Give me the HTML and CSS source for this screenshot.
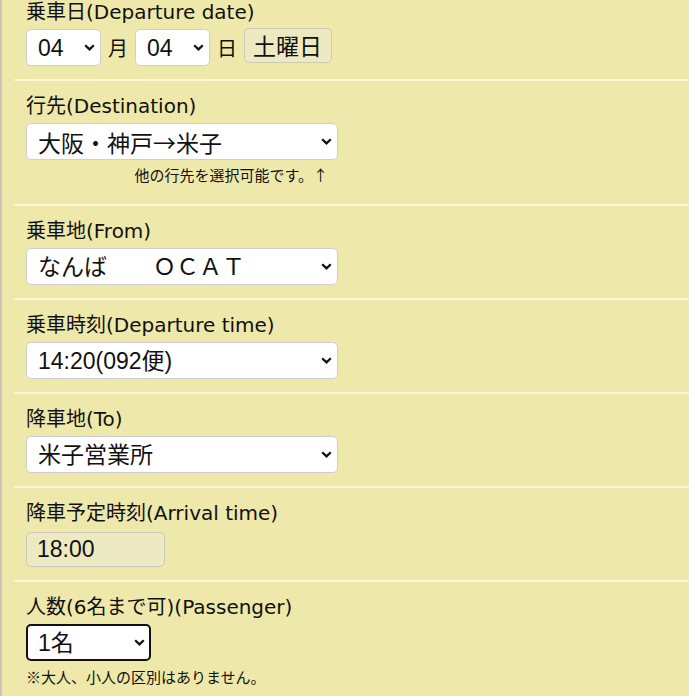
FILE: index.html
```html
<!DOCTYPE html>
<html lang="ja">
<head>
    <meta charset="UTF-8">
    <meta name="viewport" content="width=device-width, initial-scale=1.0">
    <title>乗車予約</title>
    <link rel="stylesheet" href="styles.css">
</head>
<body>
    <div class="form-wrap">
        <!-- 乗車日 -->
        <div class="row first">
            <div class="label">乗車日(Departure date)</div>
            <div class="date-line">
                <select class="pick short">
                    <option>04</option>
                    <option>05</option>
                </select>
                <span class="unit">月</span>
                <select class="pick short">
                    <option>04</option>
                    <option>05</option>
                </select>
                <span class="unit">日</span>
                <span class="weekday">土曜日</span>
            </div>
        </div>

        <!-- 行先 -->
        <div class="row">
            <div class="label">行先(Destination)</div>
            <select class="pick wide jp">
                <option>大阪・神戸→米子</option>
                <option>米子→大阪・神戸</option>
            </select>
            <div class="hint">他の行先を選択可能です。↑</div>
        </div>

        <!-- 乗車地 -->
        <div class="row">
            <div class="label">乗車地(From)</div>
            <select class="pick wide">
                <option>なんば　　ＯＣＡＴ</option>
            </select>
        </div>

        <!-- 乗車時刻 -->
        <div class="row">
            <div class="label">乗車時刻(Departure time)</div>
            <select class="pick wide">
                <option>14:20(092便)</option>
            </select>
        </div>

        <!-- 降車地 -->
        <div class="row">
            <div class="label">降車地(To)</div>
            <select class="pick wide">
                <option>米子営業所</option>
            </select>
        </div>

        <!-- 降車予定時刻 -->
        <div class="row">
            <div class="label">降車予定時刻(Arrival time)</div>
            <input class="arrival" type="text" value="18:00" readonly>
        </div>

        <!-- 人数 -->
        <div class="row last">
            <div class="label">人数(6名まで可)(Passenger)</div>
            <select class="pick count active">
                <option>1名</option>
                <option>2名</option>
                <option>3名</option>
                <option>4名</option>
                <option>5名</option>
                <option>6名</option>
            </select>
            <div class="hint left">※大人、小人の区別はありません。</div>
        </div>
    </div>
</body>
</html>
```

FILE: styles.css
```css
/* ベース */
body {
    margin: 0;
    background: #eee8aa;
    color: #111;
    font-family: "DejaVu Sans", "Noto Sans CJK JP", sans-serif;
}

.form-wrap {
    border-left: 2px solid #c9c7b3;
    padding-left: 12px;
    min-height: 100vh;
}

/* 各項目 */
.row {
    border-bottom: 2px solid #fcf6d2;
    padding: 13px 0 13px 12px;
}

.row.first {
    padding-top: 0;
}

.row.last {
    border-bottom: none;
}

.label {
    font-size: 20px;
    line-height: 24px;
    margin-bottom: 5px;
}

/* セレクト */
.pick {
    display: block;
    height: 37px;
    font-family: "Liberation Sans", "Noto Sans CJK JP", sans-serif;
    font-size: 23px;
    color: #111;
    -webkit-appearance: none;
    appearance: none;
    background: #fff url("data:image/svg+xml,%3Csvg xmlns='http://www.w3.org/2000/svg' width='11' height='7' viewBox='0 0 11 7'%3E%3Cpath d='M1.2 1.2 5.5 5.4 9.8 1.2' fill='none' stroke='%23111' stroke-width='2.3'/%3E%3C/svg%3E") no-repeat right 5px center;
    border: 1px solid #cfcfcf;
    border-radius: 5px;
    padding: 0 20px 0 11px;
}

.pick.jp {
    font-family: "Noto Sans CJK JP", sans-serif;
}

.wide {
    width: 312px;
}

.short {
    width: 75px;
}

.count {
    width: 125px;
}

.active {
    border: 2px solid #111;
    outline: none;
    padding-left: 10px;
    background-position: right 4px center;
}

/* 日付行 */
.date-line {
    display: flex;
    align-items: center;
    gap: 7px;
}

.unit {
    font-family: "Noto Sans CJK JP", sans-serif;
    font-size: 20px;
    line-height: 24px;
}

.weekday {
    align-self: flex-start;
    box-sizing: border-box;
    height: 35px;
    width: 88px;
    margin-top: -1px;
    padding: 0 8px;
    font-family: "Noto Sans CJK JP", sans-serif;
    font-size: 23px;
    line-height: 33px;
    background: #ede9c0;
    border: 1px solid #cdcbb8;
    border-radius: 5px;
}

/* 降車予定時刻 */
.arrival {
    display: block;
    box-sizing: border-box;
    width: 139px;
    height: 35px;
    margin-top: 7px;
    padding: 0 10px;
    font-family: "Liberation Sans", sans-serif;
    font-size: 23px;
    color: #111;
    background: #ede9c0;
    border: 1px solid #cdcbb8;
    border-radius: 5px;
}

/* 補足 */
.hint {
    width: 302px;
    text-align: right;
    font-family: "Noto Sans CJK JP", sans-serif;
    font-size: 15px;
    line-height: 20px;
    margin: 5px 0 6px;
}

.hint.left {
    text-align: left;
    width: auto;
    margin-top: 6px;
}
```
